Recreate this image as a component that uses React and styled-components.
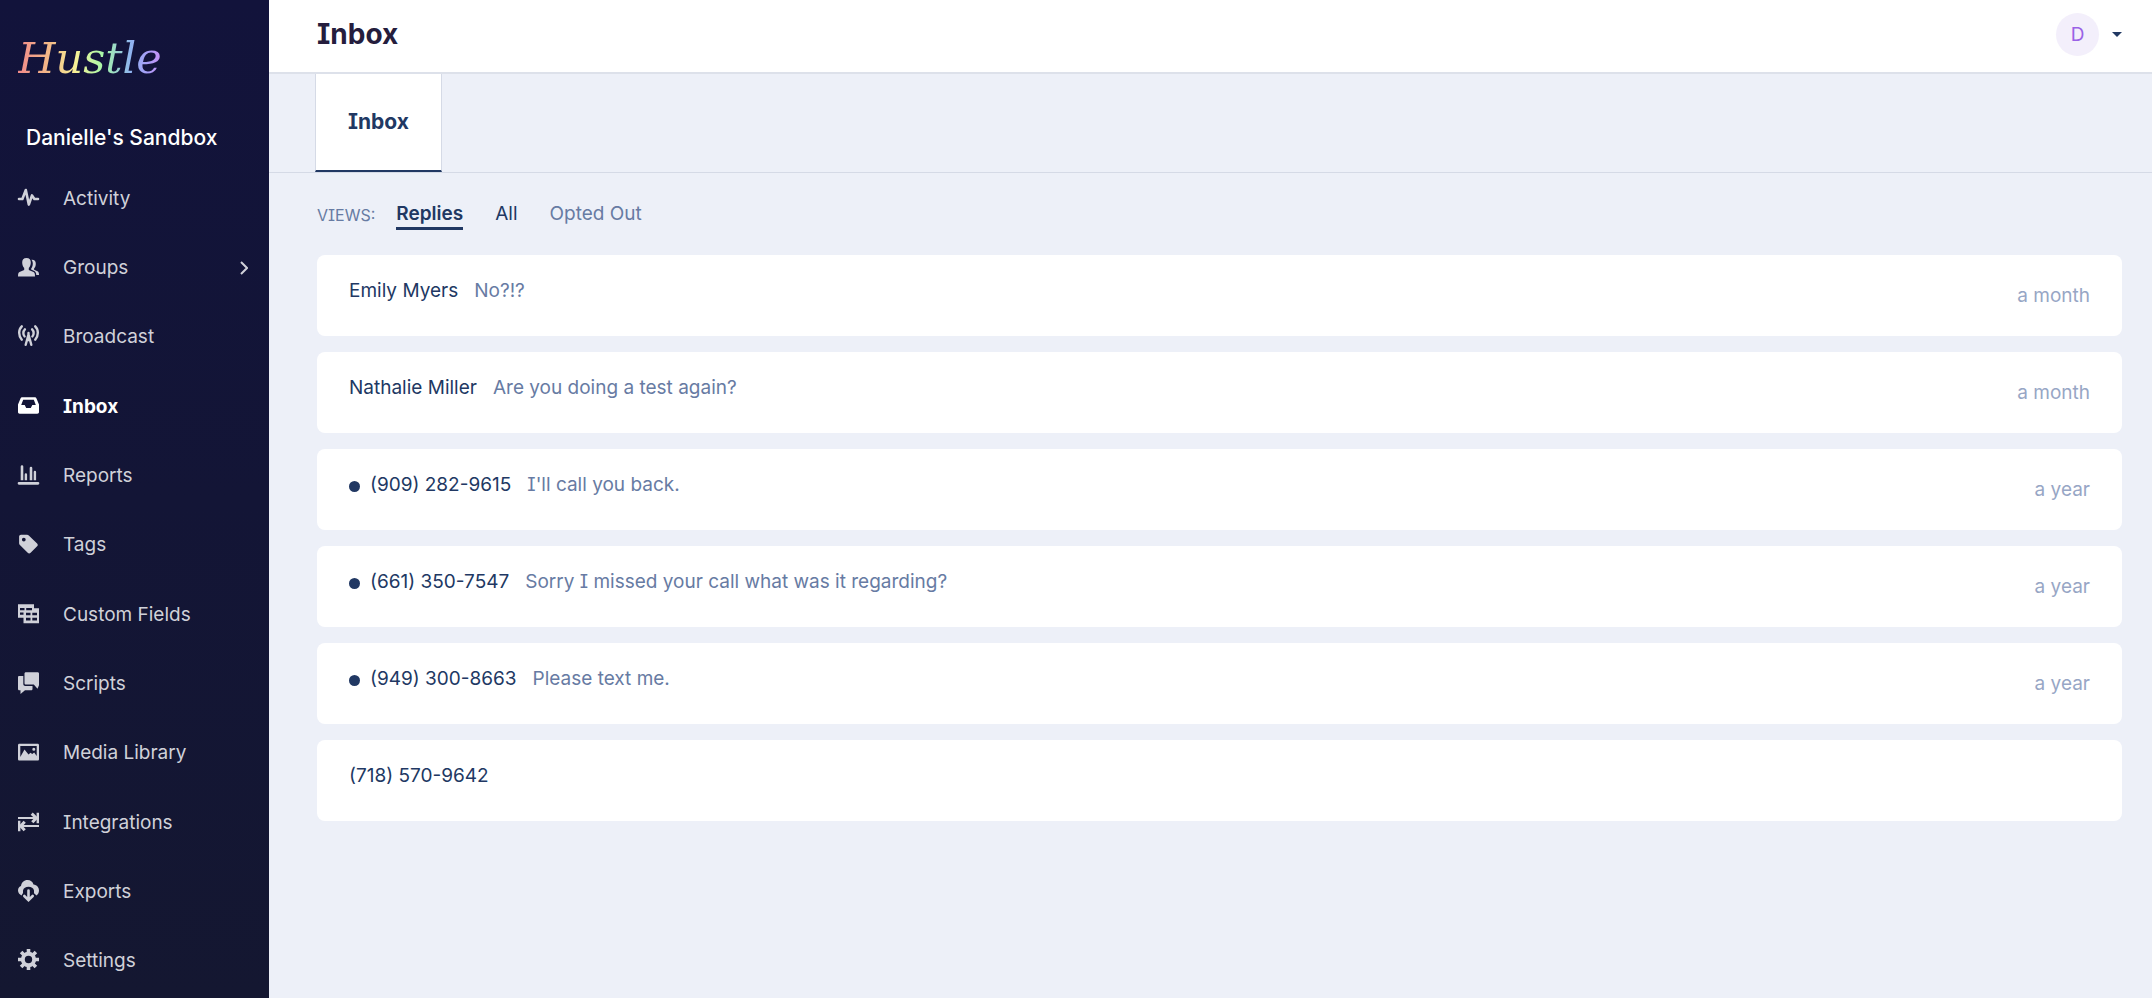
import React from 'react';
import styled, { createGlobalStyle } from 'styled-components';

const GlobalStyle = createGlobalStyle`
* {
    box-sizing: border-box;
}

body {
    margin: 0;
    background: #edf0f8;
    font-family: Inter, 'Liberation Sans', sans-serif;
    font-feature-settings: 'cv08' 1;
    font-size: 19px;
    line-height: 24px;
    color: #213863;
}

a {
    color: inherit;
    text-decoration: none;
}

button {
    font: inherit;
    color: inherit;
    background: none;
    border: 0;
    padding: 0;
    cursor: pointer;
}

ul {
    list-style: none;
    margin: 0;
    padding: 0;
}
`

const Page = styled.div`
    display: flex;
    min-height: 100vh;
`

const Sidebar = styled.aside`
    display: flex;
    flex-direction: column;
    flex: 0 0 269px;
    padding: 28px 18px 2px;
    background: linear-gradient(#12133b, #141731);
    color: #d0d1d9;
`

const Logo = styled.a`
    align-self: flex-start;
    padding-right: 8px;
    font-family: 'DejaVu Serif', serif;
    font-style: italic;
    font-size: 43px;
    line-height: 60px;
    background: linear-gradient(90deg, #f08a8a, #f3bd88 22%, #f8f297 38%, #a6f7a8 56%, #8fb4f0 74%, #a99cf8 86%, #e18cf5);
    background-clip: text;
    color: transparent;
`

const Account = styled.p`
    margin: 38px 8px 14px;
    font-size: 21px;
    font-weight: 500;
    color: #ffffff;
`

const NavList = styled.ul`
    flex: 1;
    display: grid;
    grid-auto-rows: 1fr;
`

const NavLink = styled.a`
    display: flex;
    align-items: center;
    height: 100%;
    font-weight: ${props => (props.$active ? 700 : 400)};
    color: ${props => (props.$active ? '#ffffff' : 'inherit')};

    span {
        flex: 1;
    }
`

const NavIcon = styled.svg`
    width: 21px;
    height: 21px;
    margin: 0 24px 3px 0;
    overflow: visible;
`

const Chevron = styled.svg`
    width: 8px;
    height: 14px;
    margin-right: 3px;
`

const Main = styled.main`
    flex: 1;
    min-width: 0;
`

const Header = styled.header`
    display: flex;
    align-items: center;
    justify-content: space-between;
    height: 74px;
    padding: 0 30px 4px 48px;
    background: #ffffff;
    border-bottom: 2px solid #dde1ea;
`

const Title = styled.h1`
    margin: 0;
    font-size: 28px;
    line-height: 36px;
    font-weight: 700;
    color: #251d3d;
`

const UserMenu = styled.button`
    display: flex;
    align-items: center;
    gap: 13px;
`

const Avatar = styled.span`
    width: 43px;
    height: 43px;
    border-radius: 50%;
    background: #f3effb;
    color: #9a62e6;
    line-height: 43px;
    text-align: center;
`

const Caret = styled.svg`
    width: 10px;
    height: 5px;
`

const Tabs = styled.nav`
    display: flex;
    height: 99px;
    padding-left: 46px;
    border-bottom: 1px solid #d5dae6;
`

const Tab = styled.a`
    display: flex;
    align-items: center;
    padding: 0 32px;
    background: #ffffff;
    border: 1px solid #d5dae6;
    border-top: 0;
    border-bottom: 2px solid #213863;
    font-size: 21px;
    font-weight: 700;
`

const Content = styled.section`
    padding: 29px 30px 28px 48px;
`

const Views = styled.div`
    display: flex;
    align-items: flex-start;
    height: 53px;
`

const ViewsLabel = styled.span`
    margin-right: 21px;
    font-size: 16px;
    line-height: 26px;
    color: #677ba3;
`

const View = styled.button`
    margin-right: 32px;
    padding-bottom: 1px;
    border-bottom: 3px solid ${props => (props.$active ? '#213863' : 'transparent')};
    font-weight: ${props => (props.$active ? 600 : 400)};
    color: ${props => (props.$muted ? '#677ba3' : '#213863')};
`

const Threads = styled.ul`
    display: grid;
    gap: 16px;
`

const Thread = styled.li`
    display: flex;
    align-items: flex-start;
    height: 81px;
    padding: 24px 32px;
    background: #ffffff;
    border-radius: 8px;
`

const Unread = styled.span`
    width: 11px;
    height: 11px;
    margin: 8px 10px 0 0;
    border-radius: 50%;
    background: #213863;
`

const Message = styled.p`
    flex: 1;
    margin: 0 0 0 16px;
    color: #677ba3;
`

const Time = styled.time`
    padding-top: 5px;
    color: #97a6c5;
`

const nav = [
    {
        name: 'Activity',
        icon: <path d="M1 12h3.4L7.8 3l3 14.6L14 8.4l2.4 3.6H20" fill="none" stroke="currentColor" strokeWidth="2.6" strokeLinecap="round" strokeLinejoin="round" />,
    },
    {
        name: 'Groups',
        more: true,
        icon: (
            <>
                <path d="M8.5 2C5.6 2 4 4 4.2 6.8c.1 2.2.8 4 2 5.2v2L1.500 16C.5 16.500 0 17.500 0 20.500h17c0-3-.5-4-1.500-4.500l-4.700-2v-2c1.200-1.200 1.900-3 2-5.200C13 4 11.400 2 8.500 2z" />
                <path d="M13.400 3.700c2.700-.4 4.500 1.200 4.400 4 0 2-.6 3.600-1.700 4.700v1.400l3.400 1.500c1 .5 1.500 1.500 1.500 3.700h-2.700c-.2-2.500-1-3.500-2.600-4.200l-2.600-1.200v-.8c1.200-1.400 1.700-3.300 1.700-5.200 0-1.600-.5-3-1.400-3.900z" />
            </>
        ),
    },
    {
        name: 'Broadcast',
        icon: (
            <g fill="none" stroke="currentColor" strokeWidth="2.4" strokeLinecap="round">
                <path d="M3.800 1.300C.3 4.700.3 10.700 3.800 14.700M17.200 1.300c3.500 3.400 3.500 9.400 0 13.400" />
                <path d="M6.900 4.300c-2 2-2 5.400-.3 7.200M14.100 4.300c2 2 2 5.400.3 7.200" />
                <path d="M10.500 8v4M10.500 9.500L7.700 19.800M10.500 9.500l2.800 10.300M9 15h3" />
            </g>
        ),
    },
    {
        name: 'Inbox',
        active: true,
        icon: <path fillRule="evenodd" d="M4.500 2.300h12c1 0 1.700.5 2.100 1.400L21 9.500v7.500c0 1-.7 1.700-1.700 1.700H1.700C.7 18.700 0 18 0 17V9.500l2.400-5.800c.4-.9 1.100-1.400 2.100-1.400zM5.200 4.800L3.200 10h3.500l1.500 3h4.600l1.500-3h3.500l-2-5.200z" />,
    },
    {
        name: 'Reports',
        icon: <path d="M1 18h19a1.300 1.300 0 010 2.700H1A1.300 1.300 0 011 18zM2.700 2.500a1.300 1.300 0 012.600 0v13.800H2.700zM6.700 10.500a1.200 1.200 0 012.400 0v5.800H6.700zM11.700 4a1.300 1.300 0 012.600 0v12.300h-2.600zM15.700 8a1.200 1.200 0 012.400 0v8.300h-2.400z" />,
    },
    {
        name: 'Tags',
        icon: <path fillRule="evenodd" d="M3 1.700h6c.7 0 1.300.3 1.800.8l8.300 8c.9.900.9 2 0 2.800l-6.500 6.500c-.9.900-2 .900-2.900 0L1.900 12c-.5-.5-.8-1.100-.8-1.800V3.600c0-1.100.8-1.900 1.900-1.900zM5.800 4.700a1.900 1.900 0 100 3.800 1.900 1.900 0 000-3.800z" />,
    },
    {
        name: 'Custom Fields',
        icon: <path fillRule="evenodd" d="M0 1.300h16v4h5v15H5.500v-5.500H0zM2 5v2.200h4.500V5zM8.200 5v2.200H14V5zM2 9.500v2.200h3.500V9.500zM8 9.800v2.400h4.500V9.800zM14.300 9.800v2.400H19V9.800zM8 14.800v2.700h4.500v-2.700zM14.300 14.800v2.700H19v-2.700z" />,
    },
    {
        name: 'Scripts',
        icon: <path d="M8 .3h11.500c1 0 1.500.5 1.500 1.500v11.400l-1.500 3.500-3.700-4.200H8c-1 0-1.500-.5-1.500-1.500V1.800C6.500.8 7 .3 8 .3zM1.300 4h4v8c0 1.300.8 2 2 2h7.200v2.700c0 1-.5 1.500-1.500 1.500H7L2.500 22v-3.800h-1C.5 18.200 0 17.700 0 16.700V5.300C0 4.500.5 4 1.300 4z" />,
    },
    {
        name: 'Media Library',
        icon: <path fillRule="evenodd" d="M1.500 2.800h18c1 0 1.500.5 1.500 1.500v13.700c0 1-.5 1.500-1.500 1.500h-18C.5 19.500 0 19 0 18V4.300c0-1 .5-1.500 1.500-1.500zM2.300 5v11L6.500 8.500l4 5 2-1.800 1.700 1.300 2-1.500L18.700 15V5zM15.800 6.700a1.500 1.500 0 110 3 1.500 1.500 0 010-3z" />,
    },
    {
        name: 'Integrations',
        icon: (
            <g fill="none" stroke="currentColor">
                <path d="M0 7h18M3 15h18" strokeWidth="2.200" />
                <path d="M13.700 2.700L18.300 7l-4 4.300M6.700 10.700L2.700 15l4 4.300" strokeWidth="3" />
                <path d="M19.800 1.700v10.600M1.200 9.700v10.600" strokeWidth="2.400" />
            </g>
        ),
    },
    {
        name: 'Exports',
        icon: (
            <>
                <path d="M3.500 15.500C1.500 14.500 0 12.800 0 10.500 0 8 1.500 6.500 3 6 3.500 2.500 6 0 9.500 0c3 0 5.200 1.700 6 4.500C19 5 21 7.500 21 10.500c0 2-1 4-2.500 5l-2.500-2.300V10.500c-.5-2.500-2.800-3.700-5.500-3.700S5.500 8 5 10.500V13z" />
                <path d="M10.500 10.500v9.500M6.300 16l4.200 4.200 4.200-4.200" fill="none" stroke="currentColor" strokeWidth="2.600" strokeLinecap="round" />
            </>
        ),
    },
    {
        name: 'Settings',
        icon: (
            <g fill="none" stroke="currentColor">
                <circle cx="10.500" cy="10.500" r="5.700" strokeWidth="4" />
                <path d="M10.500 0v4M10.500 17v4M0 10.500h4M17 10.500h4M3.100 3.100l3 3M14.900 14.900l3 3M3.100 17.900l3-3M14.900 6.100l3-3" strokeWidth="3.600" />
            </g>
        ),
    },
]

const threads = [
    { from: 'Emily Myers', text: 'No?!?', time: 'a month' },
    { from: 'Nathalie Miller', text: 'Are you doing a test again?', time: 'a month' },
    { from: '(909) 282-9615', text: "I'll call you back.", time: 'a year', unread: true },
    { from: '(661) 350-7547', text: 'Sorry I missed your call what was it regarding?', time: 'a year', unread: true },
    { from: '(949) 300-8663', text: 'Please text me.', time: 'a year', unread: true },
    { from: '(718) 570-9642' },
]

const App = () => {
    return (
        <Page>
            <GlobalStyle />
            <Sidebar>
                <Logo href="#">Hustle</Logo>
                <Account>Danielle's Sandbox</Account>
                <NavList>
                    {nav.map(item => (
                        <li key={item.name}>
                            <NavLink href="#" $active={item.active}>
                                <NavIcon viewBox="0 0 21 21" fill="currentColor">{item.icon}</NavIcon>
                                <span>{item.name}</span>
                                {item.more && (
                                    <Chevron viewBox="0 0 8 14" fill="none" stroke="currentColor" strokeWidth="2">
                                        <path d="M1 1l6 6-6 6" />
                                    </Chevron>
                                )}
                            </NavLink>
                        </li>
                    ))}
                </NavList>
            </Sidebar>

            <Main>
                <Header>
                    <Title>Inbox</Title>
                    <UserMenu type="button">
                        <Avatar>D</Avatar>
                        <Caret viewBox="0 0 10 5" fill="#213863"><path d="M0 0h10L5 5z" /></Caret>
                    </UserMenu>
                </Header>
                <Tabs>
                    <Tab href="#">Inbox</Tab>
                </Tabs>
                <Content>
                    <Views>
                        <ViewsLabel>VIEWS:</ViewsLabel>
                        <View type="button" $active>Replies</View>
                        <View type="button">All</View>
                        <View type="button" $muted>Opted Out</View>
                    </Views>
                    <Threads>
                        {threads.map(thread => (
                            <Thread key={thread.from}>
                                {thread.unread && <Unread />}
                                <span>{thread.from}</span>
                                <Message>{thread.text}</Message>
                                {thread.time && <Time>{thread.time}</Time>}
                            </Thread>
                        ))}
                    </Threads>
                </Content>
            </Main>
        </Page>
    )
}

export default App
